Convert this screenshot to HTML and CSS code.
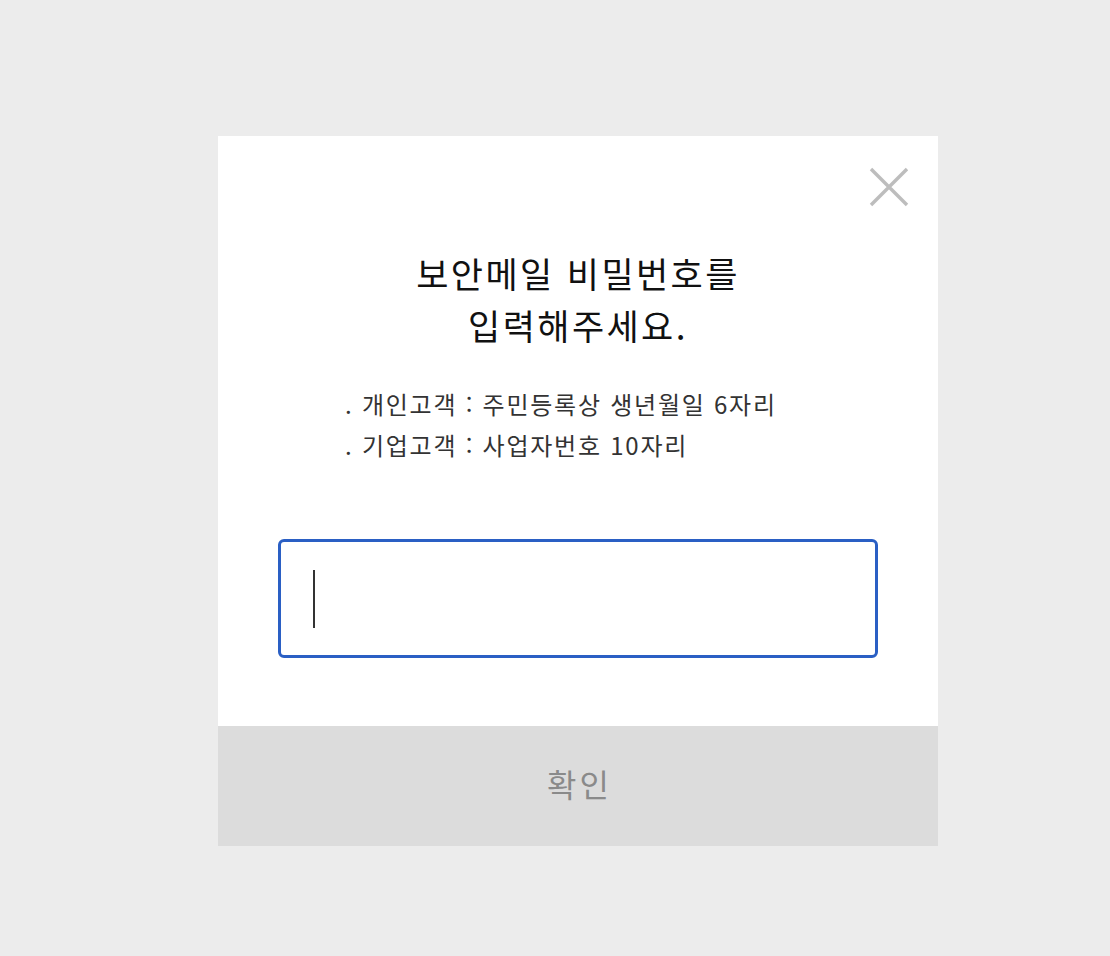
FILE: index.html
```html
<!DOCTYPE html>
<html lang="ko">
<head>
<meta charset="utf-8">
<title>보안메일</title>
<link rel="stylesheet" href="styles.css">
</head>
<body>
<div class="page">
  <div class="dialog">
    <button class="close" aria-label="닫기">
      <svg width="40" height="40" viewBox="0 0 40 40"><path d="M2 2 L38 38 M38 2 L2 38" stroke="#bdbdbd" stroke-width="3.4" fill="none"/></svg>
    </button>
    <div class="body">
      <h1 class="title">보안메일 비밀번호를<br>입력해주세요.</h1>
      <div class="desc">
        <p>. 개인고객 : 주민등록상 생년월일 6자리</p>
        <p>. 기업고객 : 사업자번호 10자리</p>
      </div>
      <div class="field"><span class="caret"></span></div>
    </div>
    <div class="confirm">확인</div>
  </div>
</div>
</body>
</html>
```
FILE: styles.css
```css
* { box-sizing: border-box; }
html, body { margin: 0; padding: 0; }
body {
  background: #ececec;
  font-family: "Noto Sans CJK KR", "Noto Sans", sans-serif;
  width: 1110px;
  height: 956px;
}
.page {
  padding-top: 136px;
  padding-left: 218px;
}
.dialog {
  position: relative;
  width: 720px;
  height: 710px;
  background: #fff;
  display: flex;
  flex-direction: column;
}
.close {
  position: absolute;
  top: 31px;
  right: 29px;
  width: 40px;
  height: 40px;
  padding: 0;
  border: 0;
  background: none;
}
.close svg { display: block; }
.body {
  flex: 1;
  padding: 111px 60px 0;
}
.title {
  margin: 0;
  text-align: center;
  font-size: 35px;
  line-height: 52px;
  font-weight: 400;
  color: #111;
  letter-spacing: 2.4px;
}
.desc {
  margin-top: 32px;
  padding-left: 67px;
  font-size: 24px;
  line-height: 41px;
  color: #333;
  letter-spacing: 1.75px;
}
.desc p { margin: 0; }
.field {
  margin-top: 74px;
  height: 119px;
  border: 3px solid #2a5fc4;
  border-radius: 6px;
  display: flex;
  align-items: center;
  padding-left: 32px;
}
.caret {
  width: 2px;
  height: 58px;
  background: #333;
}
.confirm {
  height: 120px;
  background: #dcdcdc;
  display: flex;
  align-items: center;
  justify-content: center;
  padding-bottom: 6px;
  font-size: 32px;
  color: #8a8a8a;
  font-weight: 400;
  letter-spacing: 3px;
  text-indent: 3px;
}
```
